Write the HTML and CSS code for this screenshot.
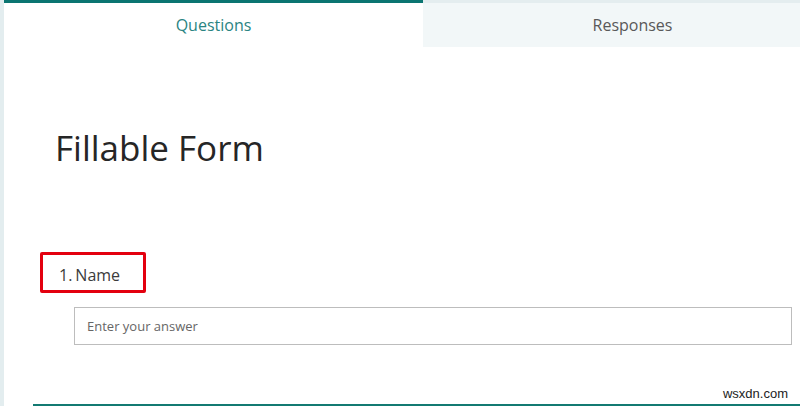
FILE: index.html
```html
<!DOCTYPE html>
<html lang="en">
<head>
    <meta charset="UTF-8">
    <meta name="viewport" content="width=device-width, initial-scale=1.0">
    <title>Fillable Form</title>
    <link rel="stylesheet" href="styles.css">
</head>
<body>
    <div class="page">
        <div class="rail"></div>
        <div class="main">
            <div class="tabs">
                <div class="tab active">Questions</div>
                <div class="tab">Responses</div>
            </div>
            <div class="content">
                <h1 class="form-title">Fillable Form</h1>
                <div class="question">
                    <div class="question-label"><span class="num">1.</span>Name</div>
                    <input type="text" class="answer" placeholder="Enter your answer">
                </div>
            </div>
            <div class="footer">
                <div class="watermark">wsxdn.com</div>
                <div class="bottom-line"></div>
            </div>
        </div>
    </div>
</body>
</html>
```

FILE: styles.css
```css
body {
    margin: 0;
    padding: 0;
    font-family: "Open Sans", Arial, sans-serif;
    background-color: #fff;
}
.page {
    display: flex;
    height: 406px;
    overflow: hidden;
}
.rail {
    width: 4px;
    flex: none;
    background-color: #e3edef;
}
.main {
    flex: 1;
    min-width: 0;
    display: flex;
    flex-direction: column;
    overflow: hidden;
}
.tabs {
    display: flex;
    height: 47px;
}
.tab {
    flex: none;
    width: 419px;
    display: flex;
    justify-content: center;
    align-items: center;
    box-sizing: border-box;
    border-top: 3px solid #e4edef;
    background-color: #f2f7f8;
    font-size: 16px;
    color: #595959;
}
.tab.active {
    border-top-color: #0b7571;
    background-color: #fff;
    color: #2a8482;
}
.content {
    flex: 1;
    padding-left: 51px;
    padding-right: 8px;
}
.form-title {
    margin: 79px 0 0 0;
    font-size: 35px;
    font-weight: 400;
    line-height: 44px;
    color: #262626;
}
.question {
    margin-top: 82px;
}
.question-label {
    display: inline-flex;
    align-items: center;
    box-sizing: border-box;
    height: 41px;
    margin-left: -15px;
    padding: 5px 23px 0 16px;
    border: 3px solid #e3000f;
    border-radius: 2px;
    font-size: 16px;
    color: #3b3b3b;
}
.num {
    margin-right: 3px;
}
.answer {
    display: block;
    box-sizing: border-box;
    width: 718px;
    height: 38px;
    margin: 14px 0 0 19px;
    padding: 0 12px;
    border: 1px solid #bdbdbd;
    font-family: "Open Sans", Arial, sans-serif;
    font-size: 13px;
    color: #333;
}
.answer::placeholder {
    color: #666;
}
.footer {
    display: flex;
    flex-direction: column;
    align-items: flex-end;
}
.watermark {
    padding-right: 12px;
    font-family: "Liberation Sans", Arial, sans-serif;
    font-size: 13px;
    line-height: 15px;
    color: #222;
}
.bottom-line {
    align-self: stretch;
    height: 2px;
    margin: 3px 0 0 29px;
    background-color: #137a72;
}
```
